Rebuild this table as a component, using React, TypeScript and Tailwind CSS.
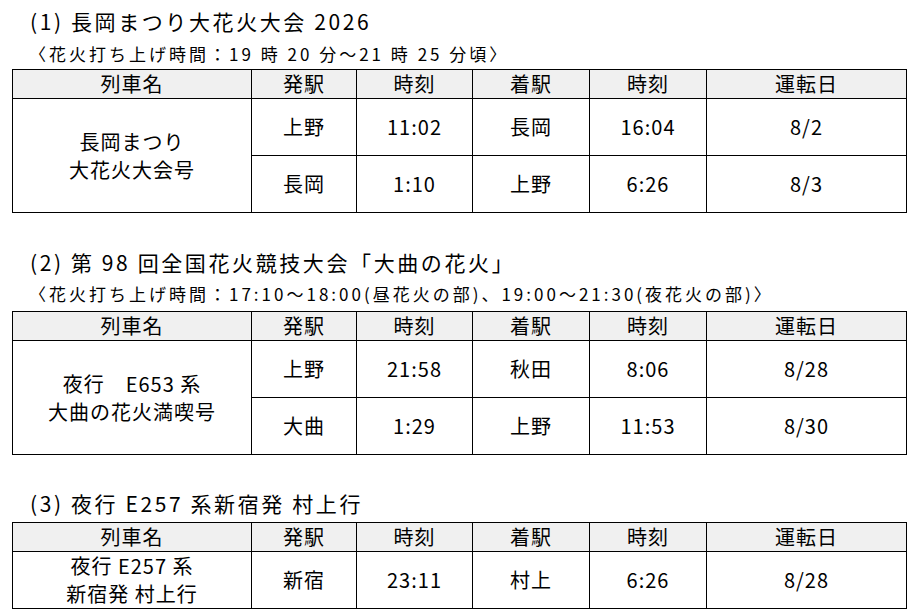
import React from "react";

type Run = { from: string; dep: string; to: string; arr: string; day: string };

type Section = {
  title: string;
  note?: string;
  name: string[];
  runs: Run[];
  wrap: string;
  titleWrap: string;
  noteWrap: string;
  rowH: string;
};

const sections: Section[] = [
  {
    title: "(1) 長岡まつり大花火大会 2026",
    note: "〈花火打ち上げ時間：19 時 20 分～21 時 25 分頃〉",
    name: ["長岡まつり", "大花火大会号"],
    runs: [
      { from: "上野", dep: "11:02", to: "長岡", arr: "16:04", day: "8/2" },
      { from: "長岡", dep: "1:10", to: "上野", arr: "6:26", day: "8/3" },
    ],
    wrap: "pt-[7px]",
    titleWrap: "",
    noteWrap: "mt-[8px] mb-[4px]",
    rowH: "h-[57px]",
  },
  {
    title: "(2) 第 98 回全国花火競技大会「大曲の花火」",
    note: "〈花火打ち上げ時間：17:10～18:00(昼花火の部)、19:00～21:30(夜花火の部)〉",
    name: ["夜行　E653 系", "大曲の花火満喫号"],
    runs: [
      { from: "上野", dep: "21:58", to: "秋田", arr: "8:06", day: "8/28" },
      { from: "大曲", dep: "1:29", to: "上野", arr: "11:53", day: "8/30" },
    ],
    wrap: "mt-[35px]",
    titleWrap: "",
    noteWrap: "mt-[7px] mb-[6px]",
    rowH: "h-[57px]",
  },
  {
    title: "(3) 夜行 E257 系新宿発 村上行",
    name: ["夜行 E257 系", "新宿発 村上行"],
    runs: [{ from: "新宿", dep: "23:11", to: "村上", arr: "6:26", day: "8/28" }],
    wrap: "mt-[34px]",
    titleWrap: "mb-[5px]",
    noteWrap: "",
    rowH: "h-[56px]",
  },
];

const cell = "border border-black text-center align-middle";

function Timetable({ s }: { s: Section }) {
  return (
    <table className="w-[894px] table-fixed border-collapse text-[20px] tracking-[1px]">
      <colgroup>
        <col className="w-[239px]" />
        <col className="w-[105px]" />
        <col className="w-[116px]" />
        <col className="w-[117px]" />
        <col className="w-[117px]" />
        <col className="w-[200px]" />
      </colgroup>
      <thead>
        <tr className="h-[29px] bg-[#f0f0f0] leading-[24px]">
          <th className={cell + " font-normal"}>列車名</th>
          <th className={cell + " font-normal"}>発駅</th>
          <th className={cell + " font-normal"}>時刻</th>
          <th className={cell + " font-normal"}>着駅</th>
          <th className={cell + " font-normal"}>時刻</th>
          <th className={cell + " font-normal"}>運転日</th>
        </tr>
      </thead>
      <tbody>
        {s.runs.map((r, i) => (
          <tr key={i} className={s.rowH}>
            {i === 0 && (
              <td rowSpan={s.runs.length} className={cell + " leading-[28px]"}>
                {s.name.map((n) => (
                  <div key={n}>{n}</div>
                ))}
              </td>
            )}
            <td className={cell}>{r.from}</td>
            <td className={cell}>{r.dep}</td>
            <td className={cell}>{r.to}</td>
            <td className={cell}>{r.arr}</td>
            <td className={cell}>{r.day}</td>
          </tr>
        ))}
      </tbody>
    </table>
  );
}

export default function App() {
  return (
    <div className="min-h-screen w-[919px] bg-white pl-[12px] text-black font-['Noto_Sans_CJK_JP','Noto_Sans',sans-serif]">
      {sections.map((s) => (
        <section key={s.title} className={s.wrap}>
          <h2 className={"pl-[18px] text-[21px] leading-[28px] tracking-[2.6px] " + s.titleWrap}>
            {s.title}
          </h2>
          {s.note && (
            <p className={"pl-[17px] text-[17px] leading-[22px] tracking-[3px] " + s.noteWrap}>
              {s.note}
            </p>
          )}
          <Timetable s={s} />
        </section>
      ))}
    </div>
  );
}
